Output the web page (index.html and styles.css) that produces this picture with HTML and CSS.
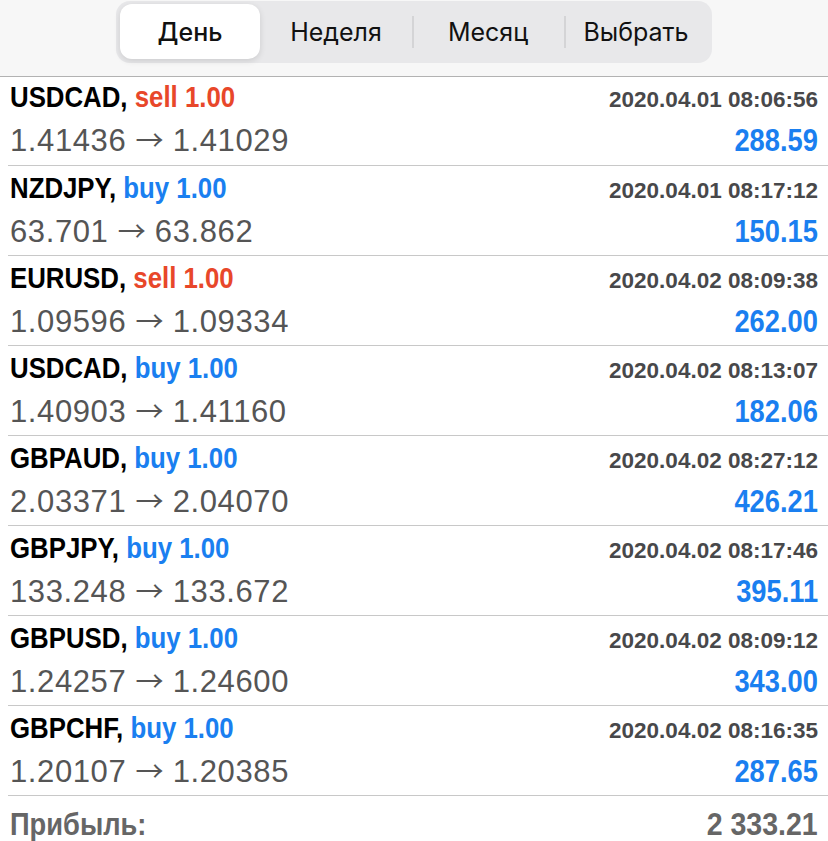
FILE: index.html
```html
<!DOCTYPE html>
<html lang="ru">

<head>
  <meta charset="UTF-8">
  <meta name="viewport" content="width=device-width, initial-scale=1.0">
  <title>История</title>
  <link rel="stylesheet" href="styles.css">
</head>

<body>
  <div class="top">
    <div class="tabs">
      <span class="active">День</span>
      <span>Неделя</span>
      <span class="sep">Месяц</span>
      <span class="sep">Выбрать</span>
    </div>
  </div>
  <ul class="deals">
    <li>
      <div class="line"><b>USDCAD, <i class="sell">sell 1.00</i></b><em>2020.04.01 08:06:56</em></div>
      <div class="line"><span>1.41436 <u>→</u> 1.41029</span><strong>288.59</strong></div>
    </li>
    <li>
      <div class="line"><b>NZDJPY, <i>buy 1.00</i></b><em>2020.04.01 08:17:12</em></div>
      <div class="line"><span>63.701 <u>→</u> 63.862</span><strong>150.15</strong></div>
    </li>
    <li>
      <div class="line"><b>EURUSD, <i class="sell">sell 1.00</i></b><em>2020.04.02 08:09:38</em></div>
      <div class="line"><span>1.09596 <u>→</u> 1.09334</span><strong>262.00</strong></div>
    </li>
    <li>
      <div class="line"><b>USDCAD, <i>buy 1.00</i></b><em>2020.04.02 08:13:07</em></div>
      <div class="line"><span>1.40903 <u>→</u> 1.41160</span><strong>182.06</strong></div>
    </li>
    <li>
      <div class="line"><b>GBPAUD, <i>buy 1.00</i></b><em>2020.04.02 08:27:12</em></div>
      <div class="line"><span>2.03371 <u>→</u> 2.04070</span><strong>426.21</strong></div>
    </li>
    <li>
      <div class="line"><b>GBPJPY, <i>buy 1.00</i></b><em>2020.04.02 08:17:46</em></div>
      <div class="line"><span>133.248 <u>→</u> 133.672</span><strong>395.11</strong></div>
    </li>
    <li>
      <div class="line"><b>GBPUSD, <i>buy 1.00</i></b><em>2020.04.02 08:09:12</em></div>
      <div class="line"><span>1.24257 <u>→</u> 1.24600</span><strong>343.00</strong></div>
    </li>
    <li>
      <div class="line"><b>GBPCHF, <i>buy 1.00</i></b><em>2020.04.02 08:16:35</em></div>
      <div class="line"><span>1.20107 <u>→</u> 1.20385</span><strong>287.65</strong></div>
    </li>
  </ul>
  <div class="total">
    <b class="label">Прибыль:</b>
    <b class="sum">2 333.21</b>
  </div>
</body>

</html>
```
FILE: styles.css
```css
* {
  margin: 0;
  padding: 0;
}

ul {
  list-style: none;
}

body {
  background-color: #fff;
  font-family: "Liberation Sans", Arial, sans-serif;
  overflow: hidden;
}

.top {
  display: flex;
  justify-content: center;
  align-items: flex-start;
  height: 77px;
  padding-top: 1px;
  box-sizing: border-box;
  background-color: #f7f7f7;
  border-bottom: 1px solid #b2b2b2;
}

.tabs {
  display: grid;
  grid-template-columns: 140px 152px 152px 144px;
  width: 596px;
  height: 62px;
  padding: 3px 4px 4px;
  box-sizing: border-box;
  background-color: #e8e8ea;
  border-radius: 14px;
}

.tabs span {
  display: flex;
  align-items: center;
  justify-content: center;
  position: relative;
  font-family: Inter, "Liberation Sans", sans-serif;
  font-size: 25px;
  color: #111;
}

.tabs .sep::before {
  content: "";
  position: absolute;
  left: 0;
  top: 12px;
  bottom: 11px;
  width: 2px;
  background-color: #d4d4d6;
}

.tabs .active {
  background-color: #fff;
  border-radius: 12px;
  box-shadow: 0 2px 6px rgba(0, 0, 0, .12);
  font-weight: 500;
}

.deals li {
  height: 90px;
  margin-left: 8px;
  padding: 2px 10px 0 2px;
  box-sizing: border-box;
  border-bottom: 1px solid #c8c8c8;
}

.deals li:first-child {
  height: 89px;
  padding-top: 0;
}

.line {
  display: flex;
  justify-content: space-between;
  align-items: baseline;
  height: 42px;
  line-height: 40px;
}

/* узкое начертание: сжимаем жирный шрифт по горизонтали */
.line b,
.line em,
.line strong,
.total b {
  display: inline-block;
  font-weight: bold;
  font-style: normal;
  white-space: nowrap;
}

.line b {
  font-size: 30px;
  color: #000;
  transform: scaleX(.86);
  transform-origin: left center;
}

.line i {
  font-style: normal;
  color: #1a7ff0;
}

.line i.sell {
  color: #e8472a;
}

.line em {
  font-size: 22.5px;
  color: #48484a;
}

.line span {
  font-size: 31px;
  letter-spacing: 0.6px;
  color: #555;
}

.line u {
  text-decoration: none;
  font-family: "Noto Sans CJK SC", sans-serif;
  font-size: 28px;
  letter-spacing: 0;
}

.line strong {
  font-size: 31px;
  color: #1a7ff0;
  transform: scaleX(.88);
  transform-origin: right center;
}

.total {
  display: flex;
  justify-content: space-between;
  padding: 12px 10px 0 10px;
  line-height: 34px;
}

.total b {
  font-size: 31px;
  color: #666;
}

.total .label {
  transform: scaleX(.88);
  transform-origin: left center;
}

.total .sum {
  transform: scaleX(.92);
  transform-origin: right center;
}
```
